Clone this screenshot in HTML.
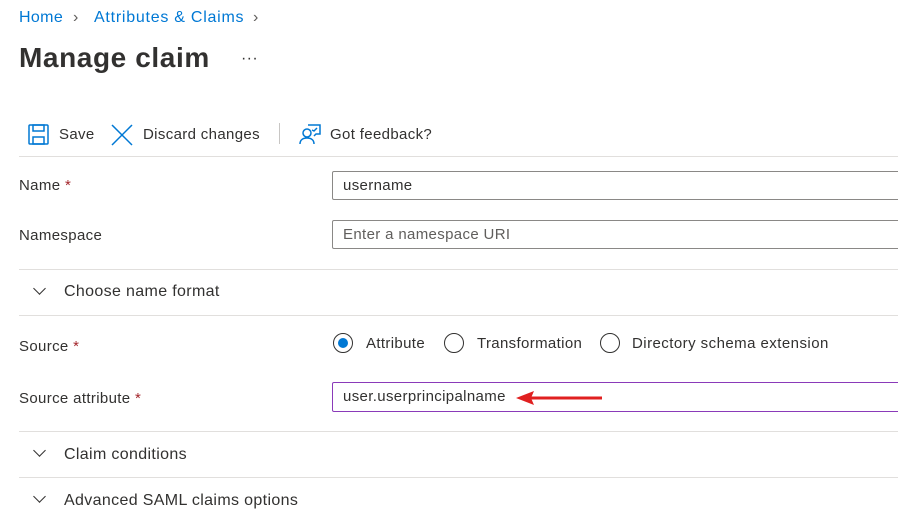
<!DOCTYPE html>
<html><head><style>
body{margin:0;width:898px;height:522px;background:#fff;font-family:"Liberation Sans",sans-serif;color:#323130;position:relative;overflow:hidden;letter-spacing:0.35px}
.a{position:absolute;white-space:nowrap}
.hr{position:absolute;left:19px;right:0;height:1px;background:#e1dfdd}
.in{position:absolute;left:332px;width:580px;border:1px solid #8a8886;border-radius:2px;box-sizing:border-box;font-size:15px;padding-left:10px}
.lbl{font-size:15px}
.st{color:#a4262c}
.chev{position:absolute;left:35px;width:8px;height:8px;border-right:1.3px solid #323130;border-bottom:1.3px solid #323130;transform:rotate(45deg)}
.rad{position:absolute;width:20px;height:20px;border:1px solid #323130;border-radius:50%;box-sizing:border-box}
.bc{font-size:16px;color:#0078d4;top:9px}
</style></head><body>
<div class="a bc" style="left:19px">Home</div>
<div class="a bc" style="left:73px;color:#605e5c">›</div>
<div class="a bc" style="left:94px;letter-spacing:0.75px">Attributes &amp; Claims</div>
<div class="a bc" style="left:253px;color:#605e5c">›</div>
<div class="a" style="left:19px;top:42px;font-size:28px;font-weight:bold;color:#323130;letter-spacing:0.6px">Manage claim</div>
<div class="a" style="left:241px;top:50px;font-size:16px">···</div>

<svg class="a" style="left:28px;top:124px" width="22" height="22" viewBox="0 0 22 22" fill="none" stroke="#0078d4" stroke-width="1.5"><rect x="1" y="1" width="19" height="19" rx="1"/><rect x="5" y="1" width="11" height="6"/><rect x="5" y="13" width="11" height="7"/></svg>
<div class="a" style="left:59px;top:126px;font-size:15px">Save</div>
<svg class="a" style="left:111px;top:124px" width="22" height="22" viewBox="0 0 22 22" stroke="#0078d4" stroke-width="1.5"><path d="M1 1L21 21M21 1L1 21"/></svg>
<div class="a" style="left:143px;top:126px;font-size:15px">Discard changes</div>
<div class="a" style="left:279px;top:123px;width:1px;height:21px;background:#c8c6c4"></div>
<svg class="a" style="left:299px;top:123px" width="22" height="22" viewBox="0 0 22 22" fill="none" stroke="#0078d4" stroke-width="1.5"><circle cx="8" cy="10" r="4"/><path d="M1 21c0-4 3-6 7-6s7 2 7 6"/><path d="M9 2h12v9h-4l-2 2"/><path d="M13 7l2 1 3-3"/></svg>
<div class="a" style="left:330px;top:126px;font-size:15px">Got feedback?</div>
<div class="hr" style="top:156px"></div>

<div class="a lbl" style="left:19px;top:177px">Name <span class="st">*</span></div>
<div class="in" style="top:171px;height:29px;line-height:27px">username</div>
<div class="a lbl" style="left:19px;top:227px">Namespace</div>
<div class="in" style="top:220px;height:29px;line-height:27px;color:#605e5c">Enter a namespace URI</div>
<div class="hr" style="top:269px"></div>
<div class="chev" style="top:284px"></div>
<div class="a" style="left:64px;top:283px;font-size:16px">Choose name format</div>
<div class="hr" style="top:315px"></div>

<div class="a lbl" style="left:19px;top:338px">Source <span class="st">*</span></div>
<div class="rad" style="left:333px;top:333px"><div style="position:absolute;left:4px;top:4px;width:10px;height:10px;border-radius:50%;background:#0078d4"></div></div>
<div class="a lbl" style="left:366px;top:335px">Attribute</div>
<div class="rad" style="left:444px;top:333px"></div>
<div class="a lbl" style="left:477px;top:335px">Transformation</div>
<div class="rad" style="left:600px;top:333px"></div>
<div class="a lbl" style="left:632px;top:335px;letter-spacing:0.45px">Directory schema extension</div>

<div class="a lbl" style="left:19px;top:390px">Source attribute <span class="st">*</span></div>
<div class="in" style="top:382px;height:30px;line-height:28px;border-color:#8a3ab9;color:#323130">user.userprincipalname</div>
<svg class="a" style="left:514px;top:388px" width="92" height="20" viewBox="0 0 92 20"><path d="M10 10H88" stroke="#e02020" stroke-width="3"/><path d="M2 10L20 3L17 10L20 17Z" fill="#e02020"/></svg>

<div class="hr" style="top:431px"></div>
<div class="chev" style="top:446px"></div>
<div class="a" style="left:64px;top:446px;font-size:16px">Claim conditions</div>
<div class="hr" style="top:477px"></div>
<div class="chev" style="top:492px"></div>
<div class="a" style="left:64px;top:492px;font-size:16px">Advanced SAML claims options</div>
</body></html>
